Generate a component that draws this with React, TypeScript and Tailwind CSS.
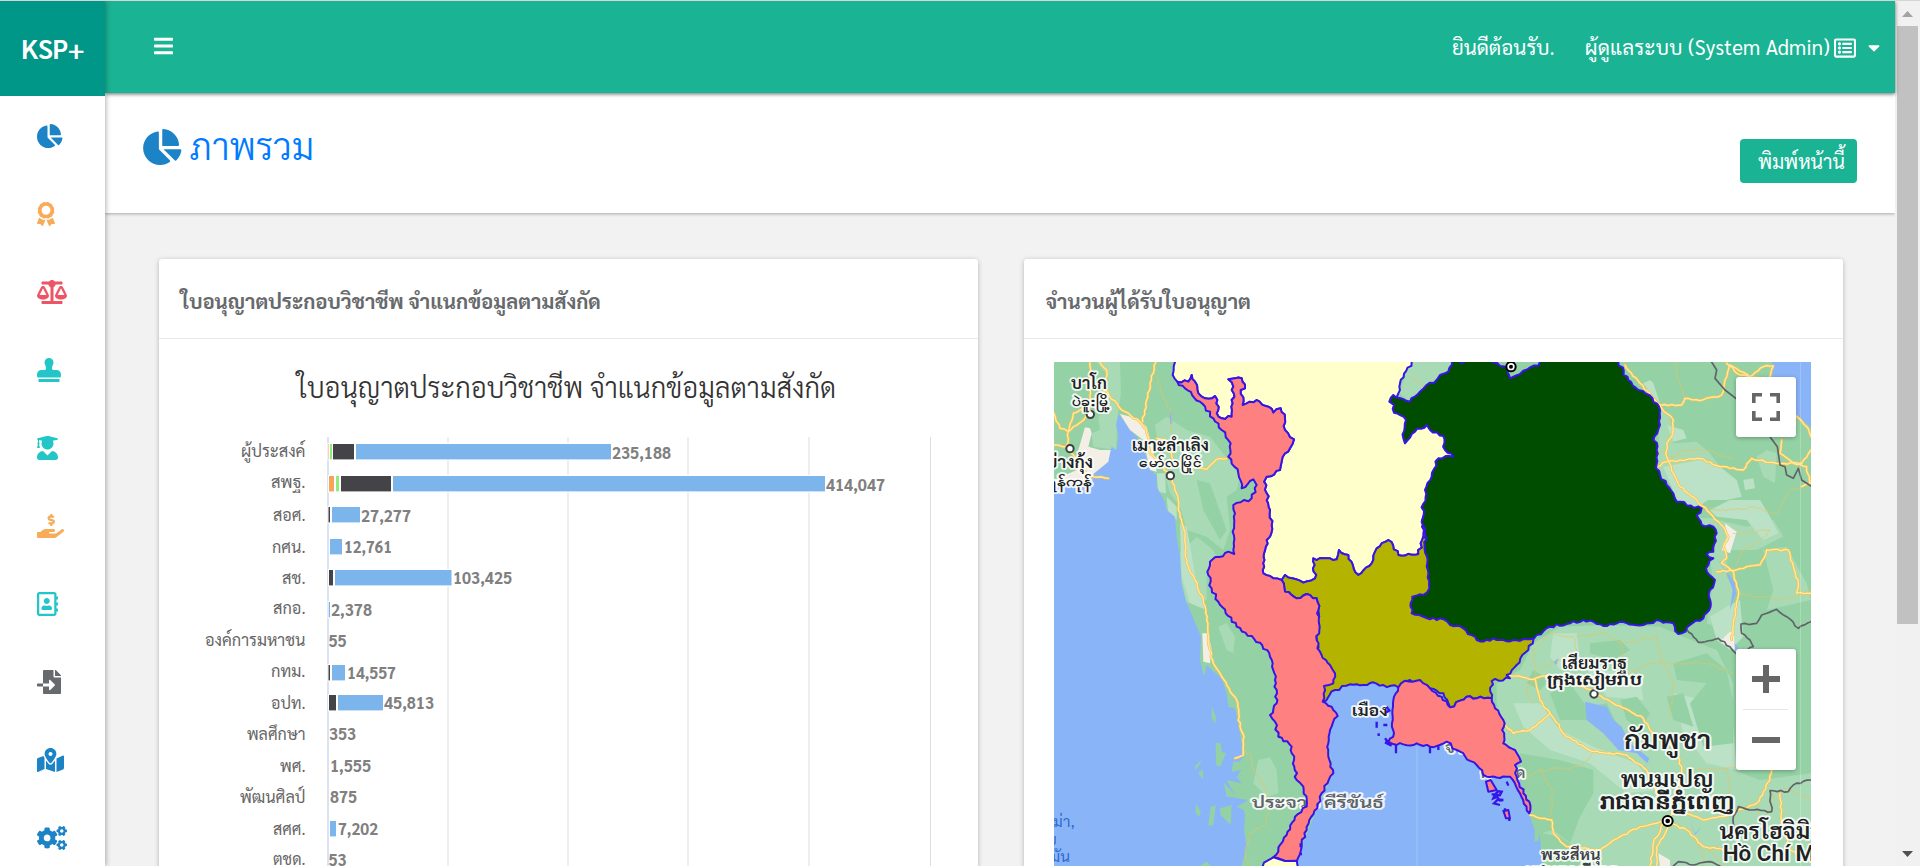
import React from 'react';
import {
  FaChartPie, FaAward, FaBalanceScale, FaStamp, FaUserGraduate, FaHandHoldingUsd,
  FaRegAddressBook, FaFileImport, FaMapMarkedAlt, FaCogs, FaBars, FaRegListAlt, FaCaretDown,
} from 'react-icons/fa';

const menu = [
  { icon: FaChartPie, style: 'w-[25.5px] text-[#1c84c6]' },
  { icon: FaAward, style: 'w-[18px] text-[#f8ac59]' },
  { icon: FaBalanceScale, style: 'w-[30px] text-[#ed5565]' },
  { icon: FaStamp, style: 'w-[24px] text-[#23c6c8]' },
  { icon: FaUserGraduate, style: 'w-[21px] text-[#23c6c8]' },
  { icon: FaHandHoldingUsd, style: 'w-[27px] text-[#f8ac59]' },
  { icon: FaRegAddressBook, style: 'w-[21px] text-[#23c6c8]' },
  { icon: FaFileImport, style: 'w-[24px] text-[#676a6c]' },
  { icon: FaMapMarkedAlt, style: 'w-[27px] text-[#1c84c6]' },
  { icon: FaCogs, style: 'w-[30px] text-[#1c84c6]' },
];

const O = '#f7a35c', G = '#90ed7d', D = '#434348', B = '#7cb5ec';

type Seg = [string, number, number];
type Row = { label: string; lx: number; ly: number; value: string; vx: number; vw: number; vy: number; top: number; segs: Seg[] };

const rows: Row[] = [
  { label: 'ผู้ประสงค์', lx: 241, ly: 457, value: '235,188', vx: 612, vw: 59, vy: 458.5, top: 444, segs: [[O, 328.5, 1], [G, 330, 2], [D, 333, 21], [B, 356, 255]] },
  { label: 'สพฐ.', lx: 271, ly: 487.5, value: '414,047', vx: 826, vw: 59, vy: 490.5, top: 476, segs: [[O, 329, 5], [G, 336, 3], [D, 341, 50], [B, 393, 432]] },
  { label: 'สอศ.', lx: 273, ly: 521, value: '27,277', vx: 361, vw: 50, vy: 521.5, top: 507, segs: [[D, 328.5, 1.5], [B, 332, 28]] },
  { label: 'กศน.', lx: 272, ly: 552.5, value: '12,761', vx: 344, vw: 48, vy: 553, top: 539, segs: [[B, 330, 12]] },
  { label: 'สช.', lx: 282, ly: 584, value: '103,425', vx: 453, vw: 59, vy: 584, top: 570, segs: [[D, 329, 4], [B, 335, 116.5]] },
  { label: 'สกอ.', lx: 273, ly: 614, value: '2,378', vx: 331, vw: 41, vy: 616, top: 602, segs: [[B, 328.7, 1.3]] },
  { label: 'องค์การมหาชน', lx: 205, ly: 646, value: '55', vx: 328.5, vw: 18, vy: 647, top: 633, segs: [] },
  { label: 'กทม.', lx: 271, ly: 677, value: '14,557', vx: 347, vw: 49, vy: 679, top: 665, segs: [[D, 328.5, 1.5], [B, 332, 13]] },
  { label: 'อปท.', lx: 271, ly: 708.5, value: '45,813', vx: 384, vw: 50, vy: 709, top: 695, segs: [[D, 329, 7], [B, 338, 45]] },
  { label: 'พลศึกษา', lx: 247, ly: 740, value: '353', vx: 329, vw: 27, vy: 740, top: 727, segs: [] },
  { label: 'พศ.', lx: 280, ly: 771.5, value: '1,555', vx: 330, vw: 41, vy: 772, top: 758, segs: [] },
  { label: 'พัฒนศิลป์', lx: 240, ly: 803, value: '875', vx: 330, vw: 27, vy: 803, top: 790, segs: [] },
  { label: 'สศศ.', lx: 273, ly: 835, value: '7,202', vx: 338, vw: 40, vy: 835, top: 821, segs: [[B, 330, 6]] },
  { label: 'ตชด.', lx: 273, ly: 865, value: '53', vx: 328.5, vw: 18, vy: 866, top: 853, segs: [] },
];

function LicenceChart() {
  return (
    <svg className="block h-[527px] w-[819px]" viewBox="159 339 819 527">
      <text x="297" y="398" textLength="539" lengthAdjust="spacingAndGlyphs" fontSize="28.5" fontWeight="300" fill="#333333">ใบอนุญาตประกอบวิชาชีพ จำแนกข้อมูลตามสังกัด</text>
      {[448, 568, 688, 809, 930.5].map((x) => (
        <rect key={x} x={x - 0.5} y="437" width="1" height="430" fill="#dedede" />
      ))}
      <rect x="327.3" y="437" width="1.4" height="430" fill="#ccd6eb" />
      {rows.map((r) => (
        <g key={r.label}>
          {r.segs.map(([c, x, w]) => (
            <rect key={c} x={x} y={r.top} width={w} height="15.4" fill={c} stroke="#fff" strokeWidth="2" paintOrder="stroke" />
          ))}
          <text x={r.lx} y={r.ly} textLength={305.5 - r.lx} lengthAdjust="spacingAndGlyphs" fontSize="17" fill="#666666">{r.label}</text>
          <text x={r.vx} y={r.vy} textLength={r.vw} lengthAdjust="spacingAndGlyphs" fontSize="17" fontWeight="700" fill="#808080">{r.value}</text>
        </g>
      ))}
    </svg>
  );
}

type P = [number, number];
const parse = (s: string): P[] => s.trim().split(/\s+/).map((p) => p.split(',').map(Number) as P);

const noise = (x: number, y: number) => {
  const v = Math.sin(x * 12.9898 + y * 78.233) * 43758.5453;
  return (v - Math.floor(v)) * 2 - 1;
};

/* Subdivides every edge and nudges the new points; an edge shared by two regions gets the same result in both. */
function rough(s: string, closed = true, amp = 5): string {
  const pts = parse(s);
  const out: string[] = [];
  const n = closed ? pts.length : pts.length - 1;
  for (let i = 0; i < n; i++) {
    const a = pts[i], b = pts[(i + 1) % pts.length];
    out.push(`${a[0]},${a[1]}`);
    const flip = a[0] > b[0] || (a[0] === b[0] && a[1] > b[1]);
    const [p, q] = flip ? [b, a] : [a, b];
    const len = Math.hypot(q[0] - p[0], q[1] - p[1]);
    const k = Math.floor(len / 10);
    const mid: string[] = [];
    for (let j = 1; j < k; j++) {
      const t = j / k;
      const off = noise(p[0] + j * 7, q[1] + j * 3) * amp;
      const x = p[0] + (q[0] - p[0]) * t - ((q[1] - p[1]) / len) * off;
      const y = p[1] + (q[1] - p[1]) * t + ((q[0] - p[0]) / len) * off;
      mid.push(`${x.toFixed(1)},${y.toFixed(1)}`);
    }
    if (flip) mid.reverse();
    out.push(...mid);
  }
  if (!closed) out.push(pts[pts.length - 1].join(','));
  return out.join(' ');
}

const cream = '405,10 405,36 398,75 412,95 445,95 455,75 465,95 475,130 495,145 525,138 532,150 530,190 545,205 575,200 578,160 580,110 565,88 605,85 615,115 602,120 608,165 650,150 685,170 700,188 722,175 735,205 735,240 762,268 750,295 735,310 725,335 720,360 680,380 672,395 680,430 690,480 695,525 690,560 680,570 672,610 670,670 690,678 725,690 735,675 790,698 825,685 820,625 890,628 897,600 925,615 955,675 995,640 1010,595 1045,570 1075,615 1135,612 1150,560 1150,500 1300,400 1300,180 1062,170 1075,130 1080,100 1115,36 1120,10';
const west = '412,95 445,95 455,75 465,95 475,130 495,145 525,138 532,150 530,190 545,205 575,200 578,160 580,110 565,88 605,85 615,115 602,120 608,165 650,150 685,170 700,188 722,175 735,205 735,240 762,268 750,295 735,310 725,335 720,360 680,380 672,395 680,430 690,480 695,525 690,560 680,570 672,610 670,670 690,678 725,690 735,725 770,745 800,732 830,745 835,780 838,840 830,870 840,905 870,945 885,970 880,1000 852,1008 848,1055 875,1070 893,1098 878,1120 865,1180 872,1240 880,1270 845,1330 832,1375 800,1430 785,1490 770,1535 735,1533 700,1522 740,1455 765,1400 800,1370 790,1310 770,1290 755,1190 715,1160 705,1115 690,1095 710,1060 705,990 690,920 660,878 590,830 535,755 515,715 502,665 510,635 565,605 583,612 578,545 585,490 580,465 635,445 650,405 640,388 605,415 595,370 565,320 572,280 545,240 520,205 480,155 435,115';
const northeast = '1048,155 1060,135 1110,155 1140,125 1160,105 1190,90 1200,75 1225,65 1235,30 1265,40 1300,20 1350,30 1380,48 1405,55 1410,85 1425,78 1450,62 1495,47 1505,20 1728,20 1735,36 1765,90 1795,120 1838,145 1860,180 1860,225 1843,260 1850,300 1848,355 1880,405 1900,430 1910,455 1985,475 1970,495 1985,525 2020,530 2030,550 2020,605 2000,612 2020,625 1998,655 2025,690 2010,720 2008,780 1990,805 1950,825 1925,850 1915,852 1900,820 1860,812 1810,825 1740,815 1690,828 1630,810 1590,820 1530,830 1490,855 1470,868 1390,870 1310,870 1270,835 1230,825 1200,805 1170,808 1115,790 1117,740 1150,735 1168,715 1160,650 1155,535 1145,515 1155,420 1175,380 1195,325 1240,320 1215,300 1210,258 1170,240 1160,225 1125,245 1095,280 1090,265 1098,210 1062,188 1062,165';
const central = '725,690 735,675 790,698 825,685 820,625 890,628 897,600 925,615 955,675 995,640 1010,595 1045,570 1075,615 1135,612 1150,560 1250,700 1480,868 1465,900 1430,945 1400,975 1410,985 1355,993 1355,1045 1310,1045 1280,1040 1260,1052 1230,1072 1210,1030 1170,1015 1110,990 1075,1012 1030,1005 1000,997 970,1005 930,1003 885,1020 848,1055 830,870 835,780 830,745 800,732 770,745 735,725';
const east = '1075,1012 1095,992 1140,990 1170,1015 1205,1040 1230,1072 1260,1052 1280,1040 1310,1045 1355,1045 1365,1075 1390,1110 1390,1180 1425,1200 1443,1235 1425,1245 1430,1280 1450,1330 1468,1355 1468,1390 1440,1330 1410,1280 1340,1280 1310,1245 1250,1200 1220,1175 1170,1190 1130,1180 1070,1185 1045,1175 1062,1150 1058,1100 1060,1050';

const light = [
  '170,36 240,36 243,130 232,205 228,300 160,290 155,250 180,240 175,205 200,160 205,80',
  '345,225 380,200 440,240 510,260 565,330 600,380 590,420 560,440 570,540 550,600 500,560 440,540 420,470 390,430 360,320',
  '420,610 470,560 520,600 540,640 500,680 500,750 440,760 420,680',
  '535,830 560,820 585,860 580,910 560,900', '655,1230 690,1222 710,1260 715,1330 680,1340 640,1300',
  '1480,880 1560,830 1700,825 1860,830 1930,860 2030,900 2080,1000 2080,1260 2160,1290 2313,1270 2313,1548 1680,1548 1560,1460 1510,1450 1480,1380 1440,1230 1395,1180 1370,1060 1370,1000 1440,960',
  '1860,180 1890,200 1900,280 1970,275 2010,310 2040,350 2000,380 1900,410 1850,370',
  '2000,560 2060,590 2060,680 2090,720 2070,780 2060,840 2000,820 2020,700',
  '2170,600 2240,590 2300,700 2313,750 2180,780 2200,720',
  '1920,500 2010,505 2120,530 2200,510 2230,560 2150,600 2060,600 1990,550',
  '2150,320 2180,300 2210,310 2205,400 2170,380', '1110,36 1235,36 1220,66 1160,105 1110,155 1078,130',
];
const lighter = [
  '1870,350 1980,330 2040,350 2090,390 2105,440 2060,450 2005,450 1960,480 1910,450 1890,400',
  '1880,225 1930,240 1940,265 1900,275', '2110,390 2140,385 2145,415 2115,420',
  '2010,480 2070,450 2160,450 2190,500 2215,550 2170,570 2120,510 2030,500',
  '1540,850 1610,850 1620,930 1700,960 1800,980 1810,1050 1700,1040 1640,960 1560,960 1530,920',
  '1420,1060 1500,1060 1560,1140 1660,1190 1790,1240 1850,1320 1760,1330 1650,1240 1530,1200 1450,1130',
  '1900,1030 1990,1050 2080,1130 2090,1260 2000,1240 1930,1150', '2060,770 2100,750 2110,860 2070,900 2030,870 2010,800',
  '1840,100 1830,90 1810,100 1830,130 1860,160', '350,370 375,370 378,430 355,425',
  '380,440 410,470 410,510 385,490', '420,520 440,530 470,700 500,780 450,760 425,680',
];
const dark = [
  '1530,1030 1590,1000 1640,1070 1700,1060 1730,1120 1650,1110 1560,1110', '1650,880 1740,870 1770,900 1720,930 1650,910',
  '1900,940 2000,910 2060,960 2080,1060 2080,1180 1990,1190 1950,1060 2000,1000 1910,990',
  '1440,1210 1560,1230 1660,1260 1660,1330 1620,1400 1590,1480 1540,1440 1500,1450 1460,1330',
  '1480,960 1530,990 1500,1020 1460,1000', '1880,1040 1930,1030 1960,1130 1900,1110', '250,60 340,36 350,170 300,205 250,180',
  '470,390 510,400 560,540 540,570 490,480', '1740,1050 1790,1040 1830,1090 1800,1140 1760,1110',
];
const sand = ['135,232 150,235 155,250 145,290 180,300 212,300 205,335 150,380 110,400 42,400 42,390 110,360 115,300', '240,192 290,205 320,230 340,300 350,365 330,360 310,270 270,240', '487,850 505,850 515,900 510,940 490,935', '2055,520 2090,545 2070,610 2045,600 2060,560', '2065,850 2080,840 2085,900 2040,875', '1855,1510 1890,1530 1890,1548 1860,1548'];

const majorRoads = [
  '150,36 150,190 85,245 80,295', '42,190 60,235 85,245 100,190 150,165 195,120 200,60 180,36', '195,120 245,180 300,215 320,240 330,310 390,375',
  '348,36 330,100 320,150 308,215', '390,375 410,430 420,500 435,560 440,640 465,690 490,750 502,800 505,880 520,940 545,980 590,1050 600,1130 612,1160 610,1215 585,1225',
  '420,345 500,358 530,328 560,326', '42,285 80,290 140,375 205,385', '350,265 375,270 400,330',
  '1755,45 1800,100 1835,140 1865,175 1900,210 1895,260 1880,280 1880,320 1900,370 1920,410 1970,450 2010,490 2050,530 2065,560 2050,590 2060,625 2045,640 2080,665 2095,720 2085,800 2075,870',
  '1865,165 1925,165 1935,145 1980,152 2045,135 2055,90 2070,45 2130,80 2170,50 2200,48 2190,80', '1850,350 1880,335 1980,325 2040,350 2110,360 2135,325 2210,340 2285,340 2313,300',
  '2060,40 2100,75 2180,90 2260,190 2300,230 2313,260', '2225,270 2220,310 2260,340 2300,350 2310,400', '2285,410 2313,400',
  '2030,665 2080,662 2120,650 2160,645 2180,600 2245,600 2260,650 2275,700 2270,730 2313,730',
  '1405,975 1480,988 1530,975 1630,1010 1720,1060 1810,1105 1840,1150 1910,1200 1925,1260 1890,1410', '1485,985 1500,1050 1530,1090 1580,1160 1660,1205 1760,1215 1820,1260 1870,1370',
  '1390,1120 1420,1150 1470,1140 1530,1090', '1470,1395 1535,1410 1540,1450 1580,1490 1680,1500 1740,1460 1800,1430 1880,1415 1940,1440 1990,1490 2050,1500 2120,1530',
  '1870,1420 1840,1480 1830,1548', '1885,1430 1850,1490 1850,1548', '1920,1380 1990,1410 2050,1400 2150,1360 2190,1290 2195,1260', '2220,1330 2225,1420 2250,1500 2313,1530',
];
const minorRoads = [
  '348,80 375,150 395,200 395,260', '610,1200 635,1215 640,1260 670,1300 685,1340 680,1420 630,1450 615,1500 625,1548',
  '1905,36 1915,90 1935,140', '1850,300 1900,320 1940,300 2010,300 2080,330', '1980,475 2080,480 2140,470 2210,490 2250,420 2300,410', '2090,640 2110,600 2160,570 2190,540 2130,545 2080,550', '2100,730 2160,740 2250,750 2313,720',
  '1490,980 1480,900 1530,850 1600,860 1610,900 1500,960', '1610,860 1700,850 1740,880 1850,860 1870,940 1900,990 1890,1100', '1740,880 1760,970 1840,940 2000,940 2080,970', '1480,1060 1460,1020 1480,990',
  '1670,1200 1620,1250 1500,1260 1450,1290', '1500,1260 1540,1330 1530,1400', '1850,1290 1960,1260 2100,1250', '2050,1400 2070,1320 2060,1260', '2200,1330 2170,1450 2313,1470', '2150,1360 2180,1470 2250,1548', '2000,1490 2050,1548', '1110,80 1150,105 1200,105', '1950,1440 2000,1548', '2230,1310 2313,1350',
];

function Label({ x, y, w, size, children, color = '#202124' }: { x: number; y: number; w: number; size: number; children: string; color?: string }) {
  return (
    <text x={x} y={y} textLength={w} lengthAdjust="spacingAndGlyphs" fontSize={size} fontWeight="600" fill={color} stroke="#fff" strokeOpacity="0.85" strokeWidth="11" strokeLinejoin="round" paintOrder="stroke">{children}</text>
  );
}

function ProvinceMap() {
  return (
    <svg className="block h-[504px] w-[757px]" viewBox="42 36 2271 1512">
      <rect x="42" y="36" width="2271" height="1512" fill="#94d2a5" />
      {light.map((p) => <polygon key={p} points={p} fill="#a8dab5" />)}
      {lighter.map((p) => <polygon key={p} points={p} fill="#bbe2c6" />)}
      {dark.map((p) => <polygon key={p} points={p} fill="#94d2a5" />)}
      <g fill="#8ab4f8">
        <polygon points="236,192 228,225 235,255 230,300 215,290 200,340 160,370 155,400 42,400 42,1548 605,1548 620,1490 612,1440 615,1400 612,1380 590,1370 625,1350 590,1345 560,1290 605,1300 590,1280 605,1260 575,1265 580,1235 600,1235 610,1220 600,1150 585,1075 565,1070 560,1030 545,985 515,960 500,945 492,980 480,930 483,860 437,750 425,700 420,620 410,560 405,500 380,480 375,455 350,410 350,375 330,360 315,310 290,260 270,240" />
        <polygon points="850,1053 885,1020 930,1003 1000,997 1070,1012 1200,1100 1390,1180 1420,1210 1468,1393 1480,1430 1500,1460 1507,1548 770,1548 785,1490 832,1375 880,1270 865,1180 870,1120 895,1100" />
        <polygon points="2195,36 2313,36 2313,232 2260,190 2200,110" />
        <polygon points="1635,1055 1700,1070 1720,1110 1745,1130 1770,1180 1828,1225 1822,1240 1790,1210 1735,1200 1690,1150 1640,1110" />
        <polygon points="2030,625 2060,665 2085,700 2088,730 2070,780 2078,720 2060,670" />
        <polygon points="2075,870 2110,910 2085,900" />
        <polygon points="1950,1410 1965,1450 1985,1430 1965,1455" />
        <polygon points="390,190 397,185 397,220 390,222" />
        <polygon points="1540,935 1555,925 1550,945" />
      </g>
      {sand.map((p) => <polygon key={p} points={p} fill="#f3efe6" />)}
      <g fill="#94d2a5">
        <polygon points="515,1070 528,1100 526,1120 515,1105" />
        <polygon points="527,1178 542,1180 545,1205 558,1210 540,1250 528,1245" />
        <polygon points="465,1248 485,1230 478,1245 465,1260" />
        <polygon points="474,1270 488,1258 490,1288" />
        <polygon points="552,1298 585,1335 600,1345 560,1340" />
        <polygon points="467,1360 482,1385 478,1400 467,1390" />
        <polygon points="512,1370 527,1365 520,1425 505,1428" />
        <polygon points="540,1375 575,1365 572,1425 542,1395" />
        <polygon points="480,1548 500,1535 512,1548" />
        <polygon points="1485,1435 1495,1430 1497,1470 1483,1475" />
      </g>
      <g fill="none" strokeLinejoin="round" strokeLinecap="round">
        {minorRoads.map((p) => <polyline key={p} points={rough(p, false, 4)} stroke="#e8c35c" strokeWidth="2.5" strokeOpacity="0.8" />)}
        {majorRoads.map((p) => <polyline key={p} points={rough(p, false, 3)} stroke="#f6c445" strokeWidth="8" />)}
        {majorRoads.map((p) => <polyline key={p} points={rough(p, false, 3)} stroke="#ffe9a8" strokeWidth="4" />)}
        <g stroke="#5f6368" strokeWidth="5">
          <polyline points="2015,36 2030,60 2025,85 2055,120 2100,155 2190,260 2212,290 2220,345 2235,350 2240,375 2260,385 2275,355 2285,390 2313,408" />
          <polyline points={rough('1940,838 1975,877 2035,865 2070,890 2090,912 2140,890 2130,870 2105,850 2103,822 2150,820 2165,795 2210,778 2240,800 2275,835 2313,815', false, 3)} />
          <polyline points={rough('2313,1290 2260,1305 2245,1325 2190,1322 2195,1385 2140,1380 2095,1370 2080,1400 2085,1440', false, 3)} />
          <polyline points={rough('1900,1548 1915,1535 1960,1545 2010,1535 2040,1548', false, 3)} />
        </g>
      </g>
      <rect x="1130" y="1190" width="2" height="358" fill="#fff" fillOpacity="0.3" />
      <rect x="2280" y="36" width="2" height="1512" fill="#fff" fillOpacity="0.3" />

      <Label x={635} y={1374} w={205} size={46} color="#5f6368">ประจวบ</Label>
      <Label x={852} y={1374} w={180} size={46} color="#5f6368">คีรีขันธ์</Label>
      <Label x={935} y={1098} w={108} size={46}>เมือง</Label>
      <Label x={1215} y={1210} w={55} size={44} color="#5f6368">จา</Label>
      <Label x={1322} y={1283} w={30} size={44} color="#5f6368">ต</Label>
      <Label x={1428} y={1283} w={28} size={44} color="#5f6368">ด</Label>

      <g stroke="#3615e6" strokeWidth="6" strokeLinejoin="round">
        <polygon points={rough(cream)} fill="#ffffcc" />
        <polygon points={rough(central)} fill="#b3b300" />
        <polygon points={rough(northeast)} fill="#004d00" />
        <polygon points={rough(west)} fill="#ff8080" />
        <polygon points={rough(east)} fill="#ff8080" />
        <polygon points="664,1560 672,1538 700,1522 735,1533 770,1532 775,1560" fill="#ffffcc" />
        <polygon points="1338,1295 1352,1290 1370,1320 1345,1325" fill="#ff8080" />
        <polygon points="1390,1382 1405,1380 1410,1405 1398,1405" fill="#ff8080" />
      </g>
      <g fill="none" stroke="#3615e6" strokeWidth="7">
        <polyline points={rough('1355,1333 1385,1325 1360,1345 1390,1350 1362,1360 1380,1365', false, 7)} />
        <path d="M1010 1115v18M1030 1125h12M1016 1150v8M1040 1070l8 12-10 5M1035 1165l12 15-12-3 20 10M1068 1185v25M1170 1190v20M1195 1185v15M782 1480v12M778 1512h8M1395 1375v10M1408 1405v8M1400 1295l5 12" />
      </g>

      <g fill="#fff" stroke="#3c4043" strokeWidth="6">
        <circle cx="151" cy="193" r="11" />
        <circle cx="90" cy="296" r="11" />
        <circle cx="391" cy="377" r="11" />
        <circle cx="1662" cy="1032" r="11" />
        <g stroke="#000"><circle cx="1413" cy="50" r="14" /><circle cx="1883" cy="1413" r="15" /></g>
      </g>
      <circle cx="1413" cy="50" r="6" />
      <circle cx="1883" cy="1413" r="7" />

      <Label x={93} y={117} w={108} size={50}>บาโก</Label>
      <Label x={95} y={168} w={118} size={38}>ပဲခူးမြို့</Label>
      <Label x={275} y={302} w={232} size={50}>เมาะลำเลิง</Label>
      <Label x={297} y={352} w={190} size={38}>မော်လမြိုင်</Label>
      <Label x={22} y={355} w={137} size={50}>ย่างกุ้ง</Label>
      <Label x={18} y={408} w={138} size={38}>ရန်ကုန်</Label>
      <Label x={1565} y={957} w={196} size={48}>เสียมราฐ</Label>
      <Label x={1522} y={1006} w={282} size={44}>ក្រុងសៀមរាប</Label>
      <Label x={1752} y={1197} w={262} size={78}>กัมพูชา</Label>
      <Label x={1742} y={1312} w={278} size={64}>พนมเปญ</Label>
      <Label x={1680} y={1378} w={404} size={60}>រាជធានីភ្នំពេញ</Label>
      <Label x={2038} y={1466} w={362} size={64}>นครโฮจิมินห์</Label>
      <g fontFamily="Roboto">
        <Label x={2048} y={1533} w={370} size={66}>Hồ Chí Minh</Label>
      </g>
      <Label x={1502} y={1530} w={180} size={46} color="#3c4043">พระสีหนุ</Label>
      <Label x={1455} y={1575} w={280} size={38} color="#3c4043">ក្រុងព្រះសីហនុ</Label>
      <g fill="#2f6ad0" fontSize="46">
        <text x="40" y="1432" textLength="64">ม่า,</text>
        <text x="24" y="1485">ย</text>
        <text x="32" y="1537" textLength="58">มัน</text>
      </g>
    </svg>
  );
}

function MapControls() {
  return (
    <>
      <button className="absolute top-[15px] right-[15px] flex size-[60px] items-center justify-center rounded-[3px] bg-white shadow-[0_1px_4px_rgba(0,0,0,0.3)]">
        <svg className="size-7 text-[#666]" viewBox="0 0 28 28" fill="none" stroke="currentColor" strokeWidth="3.6">
          <path d="M1.8 10V1.8H10M18 1.8h8.2V10M26.2 18v8.2H18M10 26.2H1.8V18" />
        </svg>
      </button>
      <div className="absolute top-[287px] right-[15px] flex h-[121px] w-[60px] flex-col items-center rounded-[3px] bg-white text-[#666] shadow-[0_1px_4px_rgba(0,0,0,0.3)]">
        <button className="flex h-[60px] items-center justify-center">
          <svg className="size-7" viewBox="0 0 28 28"><path fill="currentColor" d="M11 0h6v11h11v6H17v11h-6V17H0v-6h11z" /></svg>
        </button>
        <div className="h-px w-[45px] bg-[#e6e6e6]" />
        <button className="flex h-[60px] items-center justify-center">
          <svg className="size-7" viewBox="0 0 28 28"><path fill="currentColor" d="M0 11h28v6H0z" /></svg>
        </button>
      </div>
    </>
  );
}

function Card({ title, children }: { title: string; children: React.ReactNode }) {
  return (
    <section className="h-[640px] w-[819px] shrink-0 rounded-[3px] bg-white shadow-[0_1px_5px_rgba(0,0,0,0.25)]">
      <header className="flex h-20 items-center border-b border-[#e7eaec] pt-[6px] pl-[22px]">
        <h5 className="text-[20.35px] font-bold whitespace-nowrap text-[#676a6c]">{title}</h5>
      </header>
      {children}
    </section>
  );
}

export default function App() {
  return (
    <div className="flex h-[866px] w-[1920px] overflow-hidden border-t border-[#d5d5d5] bg-[#f2f2f2] font-['Sarabun','TH_Sarabun_New','Noto_Sans_Thai_Looped','Loma','Waree','Garuda','Noto_Sans_Thai','Noto_Sans',sans-serif]">
      <aside className="z-10 flex w-[105px] shrink-0 flex-col bg-white shadow-[1px_0_5px_rgba(0,0,0,0.3)]">
        <div className="flex h-[95px] items-center bg-[#009688] pb-[1px] pl-[21px] text-[27.5px] font-semibold tracking-[-0.6px] text-white">KSP+</div>
        <nav className="flex flex-col gap-[54px] pt-7 pl-[37px]">
          {menu.map(({ icon: Icon, style }, i) => (
            <a key={i} className="block h-6"><Icon className={`block h-6 ${style}`} /></a>
          ))}
        </nav>
      </aside>
      <div className="flex w-[1790px] shrink-0 flex-col">
        <header className="z-[5] flex h-[92px] shrink-0 items-center bg-[#1ab394] pr-[13px] pl-[49px] text-white shadow-[0_1px_4px_rgba(0,0,0,0.6)]">
          <FaBars className="mb-[3px] block h-[22px] w-[19px]" />
          <div className="ml-auto flex items-center pt-px text-[20.5px] whitespace-nowrap">
            <span className="mr-[30px]">ยินดีต้อนรับ.</span>
            <span className="tracking-[0.25px]">ผู้ดูแลระบบ (System Admin)</span>
            <FaRegListAlt className="ml-[4px] block size-[22px]" />
            <FaCaretDown className="ml-[10px] block h-[19px] w-[16px]" />
          </div>
        </header>
        <div className="flex h-[120px] shrink-0 justify-between bg-white pr-[38px] pl-[38px] shadow-[0_1px_3px_rgba(0,0,0,0.3)]">
          <h1 className="mt-[29px] flex h-[50px] items-center text-[36.8px] font-light text-[#007bff]">
            <FaChartPie className="mr-[8px] block h-[36px] w-[38.5px] text-[#1c84c6]" />
            <span className="pb-[2px]">ภาพรวม</span>
          </h1>
          <button className="mt-[46px] h-11 w-[117px] rounded-[4px] bg-[#1ab394] pt-px pl-[6px] text-[19.5px] whitespace-nowrap text-white">พิมพ์หน้านี้</button>
        </div>
        <main className="flex gap-[46px] pt-[46px] pl-[53.5px]">
          <Card title="ใบอนุญาตประกอบวิชาชีพ จำแนกข้อมูลตามสังกัด">
            <LicenceChart />
          </Card>
          <Card title="จำนวนผู้ได้รับใบอนุญาต">
            <div className="relative mt-[23px] ml-[30px] w-[757px]">
              <ProvinceMap />
              <MapControls />
            </div>
          </Card>
        </main>
      </div>
      <div className="flex w-[25px] shrink-0 flex-col items-center bg-[#f1f1f1]">
        <div className="flex h-[25px] items-center"><svg className="h-[6px] w-[11px]" viewBox="0 0 11 6"><path d="M0 6L5.5 0 11 6z" fill="#a3a3a3" /></svg></div>
        <div className="h-[598px] w-[21px] bg-[#c1c1c1]" />
        <div className="mt-auto flex h-[25px] items-center"><svg className="h-[6px] w-[11px]" viewBox="0 0 11 6"><path d="M0 0L5.5 6 11 0z" fill="#505050" /></svg></div>
      </div>
    </div>
  );
}
